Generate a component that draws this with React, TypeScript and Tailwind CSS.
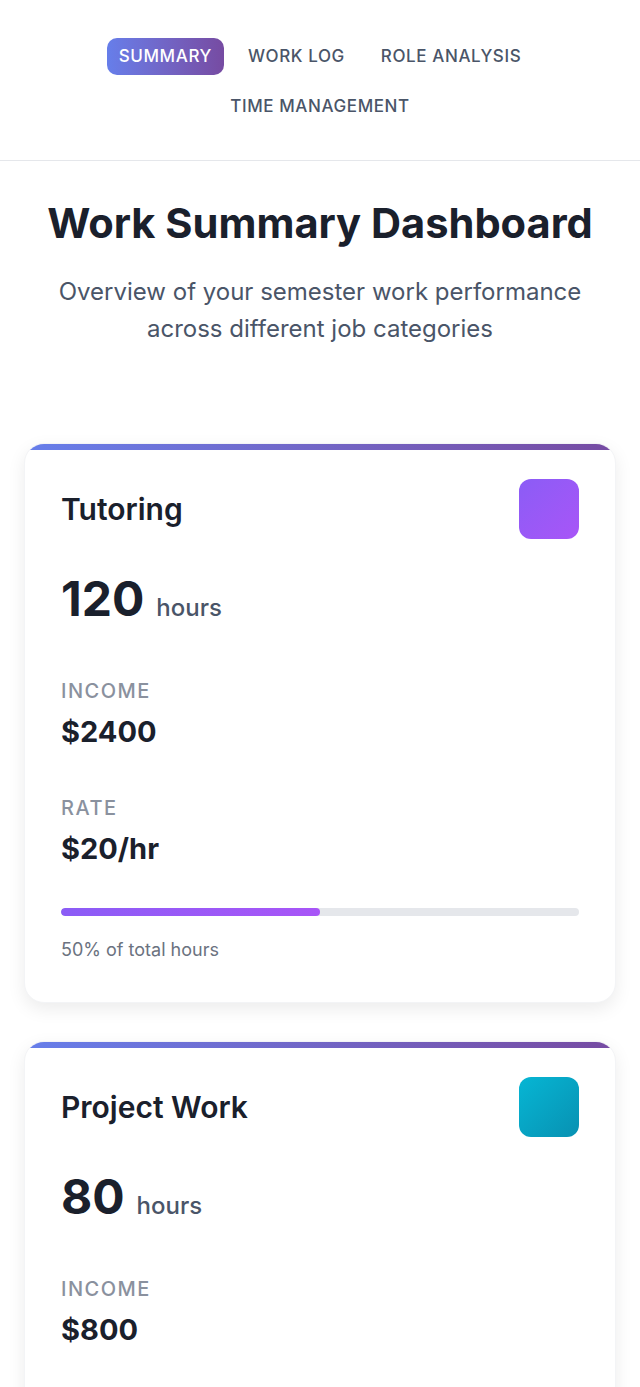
import React from 'react'

interface Category {
  name: string
  hours: number
  income: number
  rate: number
  share: number
  swatch: string
  bar: string
}

const categories: Category[] = [
  {
    name: 'Tutoring',
    hours: 120,
    income: 2400,
    rate: 20,
    share: 50,
    swatch: 'bg-gradient-to-br from-[#8b5cf6] to-[#a855f7]',
    bar: 'bg-gradient-to-r from-[#8b5cf6] to-[#a855f7]',
  },
  {
    name: 'Project Work',
    hours: 80,
    income: 800,
    rate: 10,
    share: 33,
    swatch: 'bg-gradient-to-br from-[#06b6d4] to-[#0891b2]',
    bar: 'bg-gradient-to-r from-[#06b6d4] to-[#0891b2]',
  },
  {
    name: 'Research Assistant',
    hours: 40,
    income: 600,
    rate: 15,
    share: 17,
    swatch: 'bg-gradient-to-br from-[#f59e0b] to-[#d97706]',
    bar: 'bg-gradient-to-r from-[#f59e0b] to-[#d97706]',
  },
]

const tabs = ['Summary', 'Work Log', 'Role Analysis', 'Time Management']

const CategoryCard: React.FC<{ c: Category }> = ({ c }) => (
  <div className="relative bg-white rounded-[20px] border border-gray-100 shadow-[0_6px_18px_rgba(0,0,0,0.08)] overflow-hidden px-9 pt-[35px] pb-[39px]">
    <div className="absolute top-0 left-0 right-0 h-1.5 bg-gradient-to-r from-[#667eea] to-[#764ba2]" />
    <div className="flex justify-between items-center h-[60px]">
      <h3 className="text-[30px] font-semibold text-[#1a202c] leading-none">{c.name}</h3>
      <div className={`w-[60px] h-[60px] rounded-xl ${c.swatch}`} />
    </div>
    <div className="flex items-baseline gap-3 mt-9 h-12">
      <span className="text-[48px] font-bold text-[#1a202c] leading-none">{c.hours}</span>
      <span className="text-[24px] font-medium text-[#4a5568] leading-none">hours</span>
    </div>
    <div className="mt-[56px]">
      <div className="text-[20px] font-medium uppercase tracking-[1.5px] text-[#8a919e] leading-[25px]">Income</div>
      <div className="text-[29px] font-bold text-[#1a202c] leading-[36px] mt-[10px]">${c.income}</div>
    </div>
    <div className="mt-[46px]">
      <div className="text-[20px] font-medium uppercase tracking-[1.5px] text-[#8a919e] leading-[25px]">Rate</div>
      <div className="text-[29px] font-bold text-[#1a202c] leading-[36px] mt-[10px]">${c.rate}/hr</div>
    </div>
    <div className="mt-[41px] h-2 rounded-full bg-[#e5e7eb] overflow-hidden">
      <div className={`h-full rounded-full ${c.bar}`} style={{ width: `${c.share}%` }} />
    </div>
    <p className="mt-[20px] text-[18px] leading-[27px] text-[#6b7280]">{c.share}% of total hours</p>
  </div>
)

export default function App() {
  return (
    <div className="min-h-screen bg-white font-['Inter',sans-serif]">
      <nav className="border-b border-gray-200 px-6 pt-[38px] pb-[35px]">
        <div className="flex flex-wrap justify-center gap-x-3 gap-y-[13px]">
          {tabs.map((t, i) => (
            <button
              key={t}
              className={
                i === 0
                  ? 'px-3 h-[37px] rounded-[10px] text-[17px] font-medium uppercase tracking-[0.6px] text-white bg-gradient-to-r from-[#667eea] to-[#764ba2]'
                  : 'px-3 h-[37px] rounded-[10px] text-[17px] font-medium uppercase tracking-[0.6px] text-[#4a5568]'
              }
            >
              {t}
            </button>
          ))}
        </div>
      </nav>

      <main className="px-6">
        <div className="text-center pt-[36px] pb-[96px]">
          <h1 className="text-[41.6px] font-bold text-[#1a202c] leading-[52px]">Work Summary Dashboard</h1>
          <p className="mt-[24px] text-[24px] text-[#4a5568] leading-[37px] px-6">
            Overview of your semester work performance across different job categories
          </p>
        </div>
        <div className="flex flex-col gap-[38px] pb-10">
          {categories.map((c) => (
            <CategoryCard key={c.name} c={c} />
          ))}
        </div>
      </main>
    </div>
  )
}
